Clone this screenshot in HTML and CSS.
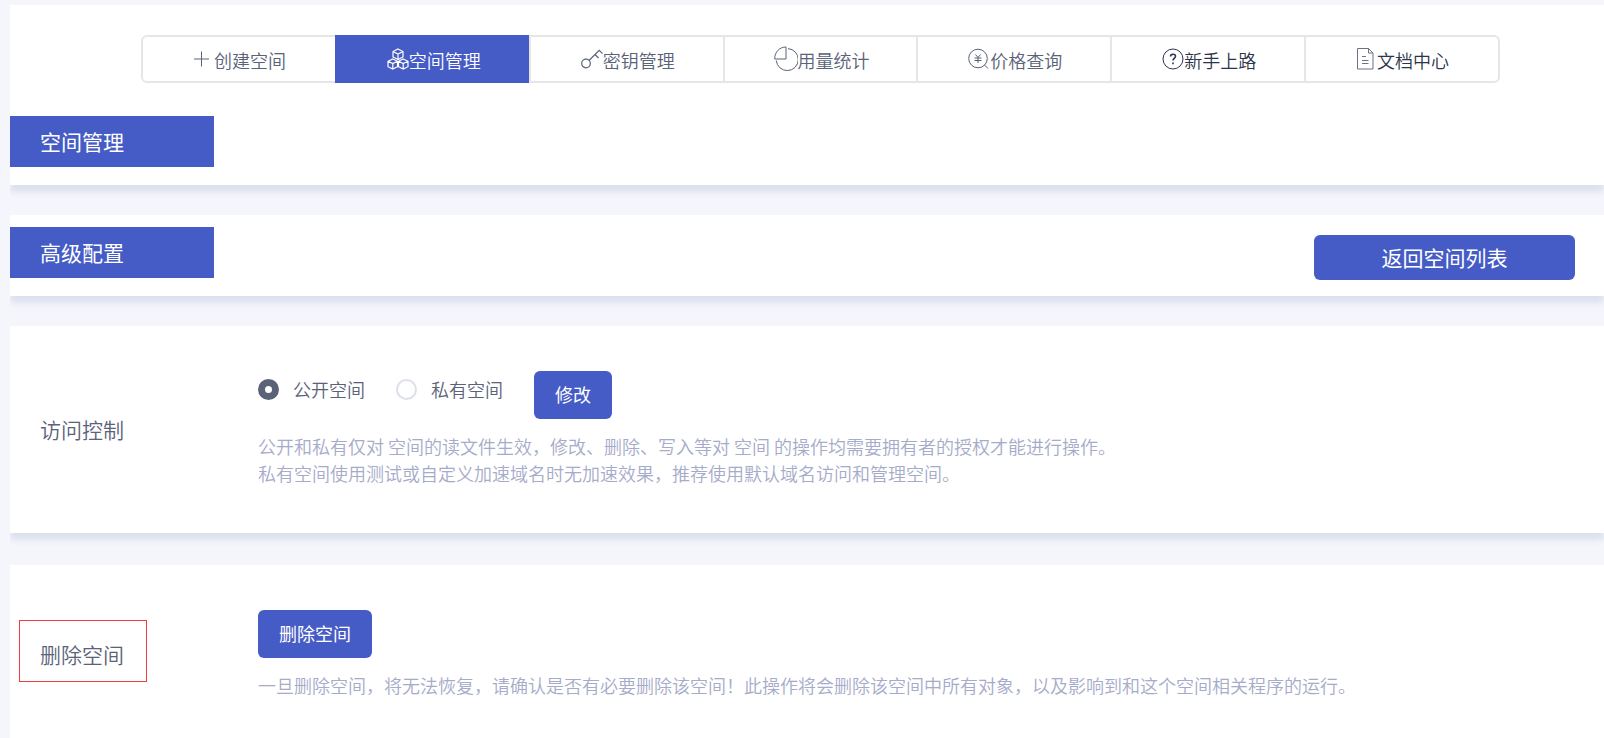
FILE: index.html
```html
<!DOCTYPE html>
<html lang="zh-CN">
<head>
<meta charset="utf-8">
<meta name="viewport" content="width=device-width, initial-scale=1">
<title>空间管理</title>
<link rel="stylesheet" href="styles.css">
</head>
<body>
<main class="page">
  <section class="panel panel-nav">
    <nav class="tabs">
      <a class="tab" href="#create">
        <svg class="icon icon-plus" viewBox="0 0 20 22"><path d="M7.500 3.500v15M0 11h15"/></svg>创建空间</a>
      <a class="tab tab-active" href="#spaces" aria-current="page">
        <svg class="icon icon-cubes" viewBox="0 0 22 22"><path d="M11 1l5 2.500v5.500l-5 2.500-5-2.500V3.500zM6 3.500l5 2.500 5-2.500M11 6v5.500M5.800 11l4.700 2.300v5.400L5.800 21 1 18.700v-5.400zM1 13.300l4.800 2.300 4.700-2.300M5.800 15.600V21M16.200 11l4.800 2.300v5.400L16.200 21l-4.700-2.300v-5.400zM11.500 13.300l4.700 2.300 4.800-2.300M16.200 15.600V21"/></svg>空间管理</a>
      <a class="tab" href="#keys">
        <svg class="icon icon-key" viewBox="0 0 22 22"><circle cx="5" cy="15.500" r="4.300"/><path d="M8 12.500L18.200 2.300l3.300 3.300M14 6.500l3.500 3.500"/></svg>密钥管理</a>
      <a class="tab" href="#usage">
        <svg class="icon icon-pie" viewBox="0 0 24 26"><path d="M12 1v12H.7C.7 6 5.500 1 12 1z"/><path d="M14 2.600a11 11 0 1 1-11.700 12"/></svg>用量统计</a>
      <a class="tab" href="#price">
        <svg class="icon" viewBox="0 0 22 22"><circle cx="10" cy="10.500" r="9.300"/><path d="M16.500 17l3.500 3.500M7.500 6.500l2.500 3 2.500-3M10 9.500v5.500M6.500 10h7M6.500 12.500h7"/></svg>价格查询</a>
      <a class="tab tab-dark" href="#guide">
        <svg class="icon" viewBox="0 0 22 22"><circle cx="11" cy="11" r="10"/><path class="bold" d="M8.500 8.500c0-3 5-3 5-.2 0 2-2.500 2.200-2.500 4.200M11 14.500v1.800"/></svg>新手上路</a>
      <a class="tab tab-dark" href="#docs">
        <svg class="icon icon-doc" viewBox="0 0 20 22"><path d="M.5 .5h11l4.500 4.500v16H.5zM11.500 .5v4.500H16M5 8.500h4M5 12.500h6.500M5 15.500h6.500"/></svg>文档中心</a>
    </nav>
    <h1 class="title">空间管理</h1>
  </section>

  <section class="panel panel-head">
    <h2 class="title">高级配置</h2>
    <button class="button button-back" type="button">返回空间列表</button>
  </section>

  <section class="panel row">
    <h3 class="row-label">访问控制</h3>
    <div class="row-body">
      <form class="access">
        <label class="choice"><input class="radio" type="radio" name="access" checked>公开空间</label>
        <label class="choice"><input class="radio" type="radio" name="access">私有空间</label>
        <button class="button" type="button">修改</button>
      </form>
      <p class="hint">公开和私有仅对 空间的读文件生效，修改、删除、写入等对 空间 的操作均需要拥有者的授权才能进行操作。<br>私有空间使用测试或自定义加速域名时无加速效果，推荐使用默认域名访问和管理空间。</p>
    </div>
  </section>

  <section class="panel row row-delete">
    <h3 class="row-label row-label-marked">删除空间</h3>
    <div class="row-body">
      <button class="button" type="button">删除空间</button>
      <p class="hint">一旦删除空间，将无法恢复，请确认是否有必要删除该空间！此操作将会删除该空间中所有对象，以及影响到和这个空间相关程序的运行。</p>
    </div>
  </section>
</main>
</body>
</html>
```
FILE: styles.css
```css
* {
  box-sizing: border-box;
}

body {
  margin: 0;
  background: #f4f6fb;
  color: #5a6278;
  font: 350 18px/27px "Noto Sans CJK SC", sans-serif;
}

h1, h2, h3, p {
  margin: 0;
  font-weight: 350;
}

.page {
  display: flex;
  flex-direction: column;
  gap: 30px;
  min-height: 100vh;
  margin-left: 10px;
  padding-top: 5px;
  overflow: hidden;
}

.panel {
  background: #fff;
  box-shadow: 0 7px 6px #dce1ee;
}

.panel-nav {
  padding: 30px 0 18px;
}

.tabs {
  display: flex;
  margin: 0 104px 33px 131px;
  border: 2px solid #e6e6e6;
  border-radius: 6px;
}

.tab {
  display: flex;
  flex: 1;
  align-items: center;
  justify-content: center;
  height: 44px;
  padding: 2px 0 0 2px;
  border-left: 2px solid #e6e6e6;
  color: #5a6278;
  text-decoration: none;
}

.tab:first-child {
  border-left: 0;
}

.tab-active {
  height: 48px;
  margin: -2px 0;
  border-color: #455bc5;
  background: #455bc5;
  color: #fff;
}

.tab-dark {
  color: #2b344b;
}

.icon {
  width: 22px;
  height: 22px;
  margin-bottom: 2px;
  fill: none;
  stroke: currentColor;
  stroke-width: 1;
}

.icon-cubes,
.icon-key {
  stroke-width: 1.2;
}

.icon-plus,
.icon-doc {
  width: 20px;
}

.icon-doc {
  stroke: #6b7284;
}

.icon-pie {
  width: 24px;
  height: 26px;
}

.bold {
  stroke-width: 1.6;
}

.title {
  width: 204px;
  padding: 12px 30px;
  background: #455bc5;
  color: #fff;
  font-size: 21px;
  font-weight: 400;
  line-height: 27px;
}

.panel-head {
  display: flex;
  align-items: flex-start;
  justify-content: space-between;
  padding: 12px 29px 16px 0;
}

.button {
  height: 48px;
  padding: 0 21px 2px;
  border: 0;
  border-radius: 6px;
  background: #455bc5;
  color: #fff;
  font: inherit;
  font-weight: 400;
}

.button-back {
  width: 261px;
  height: 45px;
  margin-top: 8px;
  padding-bottom: 0;
  font-size: 21px;
}

.row {
  display: grid;
  grid-template-columns: 248px 1fr;
  align-items: center;
  padding: 45px 0 46px;
}

.row-label {
  padding-left: 30px;
  font-size: 21px;
}

.row-delete {
  flex: 1;
  align-content: start;
  margin-top: 2px;
}

.row-label-marked {
  align-self: start;
  width: 128px;
  margin: 10px 0 0 9px;
  padding: 20px 0 13px 20px;
  border: 1px solid #f23c3c;
}

.access {
  display: flex;
}

.choice {
  display: flex;
  align-items: center;
  height: 37px;
  margin-right: 31px;
}

.radio {
  width: 21px;
  height: 21px;
  margin: 0 14px 0 0;
  border: 2px solid #dce0e8;
  border-radius: 50%;
  appearance: none;
}

.radio:checked {
  border: 7px solid #5a6278;
}

.hint {
  padding-top: 14px;
  color: #a6abc9;
}
```
